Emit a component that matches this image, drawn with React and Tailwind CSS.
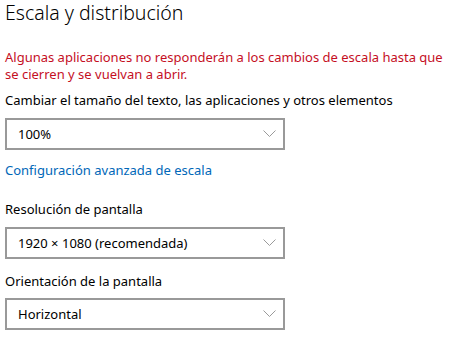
import React from "react";

function Chevron() {
  return (
    <svg width="13" height="7" viewBox="0 0 13 7" fill="none" className="mb-[2px] shrink-0">
      <path d="M0.5 0.5 L6.5 6.5 L12.5 0.5" stroke="#9a9a9a" strokeWidth="1" />
    </svg>
  );
}

function Dropdown({ value }) {
  return (
    <div className="flex h-[32px] w-[280px] items-center justify-between border-2 border-[#999] bg-white pl-[11px] pr-[7px]">
      <span className="text-[13px] leading-[17px] text-black">{value}</span>
      <Chevron />
    </div>
  );
}

export default function App() {
  return (
    <div
      className="min-h-[347px] w-[469px] bg-white pl-[5px] text-black"
      style={{ fontFamily: '"Noto Sans", "Open Sans", sans-serif' }}
    >
      <h1 className="text-[19.5px] font-light leading-[26px]">Escala y distribución</h1>

      <p className="mt-[23px] w-[450px] text-[13px] leading-[17px] text-[#c50f1f]">
        Algunas aplicaciones no responderán a los cambios de escala hasta que se cierren y se vuelvan a abrir.
      </p>

      <p className="mt-[9px] text-[13px] leading-[17px]">
        Cambiar el tamaño del texto, las aplicaciones y otros elementos
      </p>
      <div className="mt-[9px]">
        <Dropdown value="100%" />
      </div>

      <p className="mt-[12px] text-[13px] leading-[17px] text-[#0067b8]">
        Configuración avanzada de escala
      </p>

      <p className="mt-[22px] text-[13px] leading-[17px]">Resolución de pantalla</p>
      <div className="mt-[9px]">
        <Dropdown value="1920 × 1080 (recomendada)" />
      </div>

      <p className="mt-[14px] text-[13px] leading-[17px]">Orientación de la pantalla</p>
      <div className="mt-[8px]">
        <Dropdown value="Horizontal" />
      </div>
    </div>
  );
}
